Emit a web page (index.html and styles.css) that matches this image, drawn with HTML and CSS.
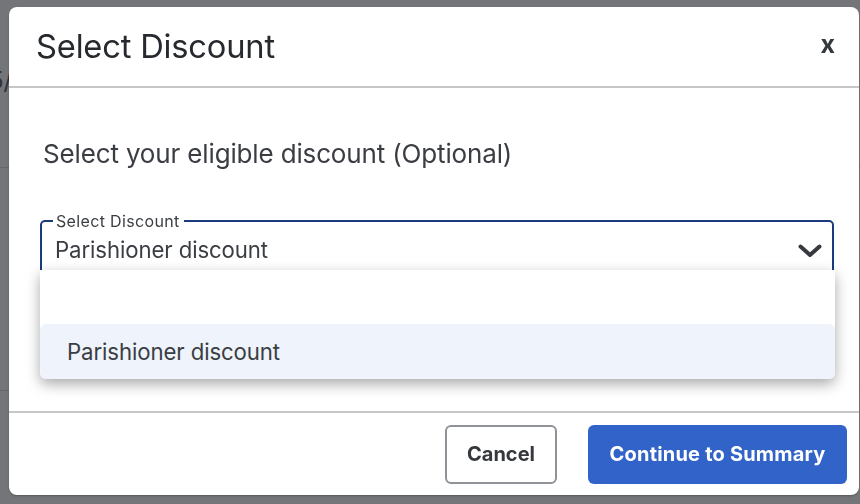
FILE: index.html
```html
<!DOCTYPE html>
<html lang="en">
<head>
<meta charset="utf-8">
<title>Select Discount</title>
<link rel="stylesheet" href="styles.css">
</head>
<body>
<div class="page">
  <div class="page-row page-row-top"><span class="page-text">5/</span></div>
  <div class="page-row page-row-mid"></div>
  <div class="page-row page-row-low"></div>
</div>
<div class="modal" role="dialog" aria-labelledby="modal-title">
  <header class="modal-header">
    <h1 id="modal-title" class="modal-title">Select Discount</h1>
    <button class="close-btn" type="button" aria-label="Close">x</button>
  </header>
  <div class="modal-body">
    <p class="intro">Select your eligible discount (Optional)</p>
    <div class="select-wrap">
      <fieldset class="select-field">
        <legend class="select-legend">Select Discount</legend>
        <div class="select-value-row">
          <span class="select-value">Parishioner discount</span>
          <svg class="chevron" width="24" height="14" viewBox="0 0 24 14" aria-hidden="true">
            <path d="M2.5 2.5 L12 11 L21.5 2.5" fill="none" stroke="#36393f" stroke-width="4" stroke-linecap="round" stroke-linejoin="round"/>
          </svg>
        </div>
      </fieldset>
      <ul class="dropdown" role="listbox">
        <li class="option option-empty" role="option"></li>
        <li class="option option-active" role="option">Parishioner discount</li>
      </ul>
    </div>
  </div>
  <footer class="modal-footer">
    <button class="btn btn-secondary" type="button">Cancel</button>
    <button class="btn btn-primary" type="button">Continue to Summary</button>
  </footer>
</div>
</body>
</html>
```

FILE: styles.css
```css
* { box-sizing: border-box; }

html, body {
  margin: 0;
  padding: 0;
  width: 860px;
  height: 504px;
  overflow: hidden;
}

body {
  background: #737579;
  font-family: Inter, "Noto Sans", "Liberation Sans", sans-serif;
  color: #3a3d42;
}

/* page behind the overlay */
.page {
  display: flex;
  flex-direction: column;
}
.page-row {
  border-bottom: 1px solid #65676b;
}
.page-row-top { height: 168px; padding-top: 66px; }
.page-row-mid { height: 223px; }
.page-row-low { height: 113px; border-bottom: 0; }
.page-text {
  font-size: 24px;
  color: #2f3236;
  margin-left: -11px;
}

/* modal */
.modal {
  position: fixed;
  left: 9px;
  top: 7px;
  width: 850px;
  height: 488px;
  background: #ffffff;
  border-radius: 8px;
  display: flex;
  flex-direction: column;
  box-shadow: 0 1px 2px rgba(0,0,0,0.25);
}

.modal-header {
  height: 81px;
  flex: none;
  display: flex;
  align-items: center;
  justify-content: space-between;
  padding: 0 24px 2px 27px;
  border-bottom: 2px solid #c6c6c6;
}

.modal-title {
  margin: 0;
  font-size: 32.7px;
  font-weight: 400;
  color: #26292d;
  letter-spacing: -0.2px;
}

.close-btn {
  border: 0;
  background: none;
  padding: 0;
  font-family: Inter, "Noto Sans", sans-serif;
  font-size: 25px;
  font-weight: 700;
  color: #35383d;
  line-height: 1;
  margin-top: -2px;
}

.modal-body {
  flex: 1;
  padding: 51px 24px 0 31px;
}

.intro {
  margin: 0 0 0 3px;
  font-size: 26px;
  line-height: 30px;
  color: #3a3d42;
  letter-spacing: -0.15px;
}

.select-wrap {
  position: relative;
  margin-top: 44px;
  width: 795px;
}

.select-field {
  margin: 0;
  width: 794px;
  height: 64px;
  border: 2px solid #1c3b7d;
  border-radius: 5px;
  padding: 0 10px 0 13px;
}

.select-legend {
  font-size: 16px;
  color: #3a3d42;
  padding: 0 4px 0 3px;
  margin-left: -2px;
  line-height: 16px;
  letter-spacing: 0.35px;
}

.select-value-row {
  display: flex;
  align-items: center;
  justify-content: space-between;
  margin-top: 7px;
}

.select-value {
  font-size: 22.2px;
  color: #3a3d42;
  letter-spacing: -0.1px;
}

.chevron {
  margin-top: 2px;
  margin-right: 0;
}

.dropdown {
  position: absolute;
  left: 0;
  top: 57px;
  width: 795px;
  margin: 0;
  padding: 0;
  list-style: none;
  background: #ffffff;
  border-radius: 0 0 6px 6px;
  box-shadow: 0 5px 14px rgba(0,0,0,0.34);
  overflow: hidden;
}

.option {
  height: 54px;
  display: flex;
  align-items: center;
  padding-left: 27px;
  font-size: 22.2px;
  color: #3a3d42;
  letter-spacing: -0.1px;
}
.option-active {
  height: 55px;
  background: #eef3fc;
  border-radius: 6px;
}

.modal-footer {
  flex: none;
  height: 84px;
  border-top: 2px solid #c6c6c6;
  display: flex;
  align-items: center;
  justify-content: flex-end;
  gap: 31px;
  padding: 0 12px 0 0;
}

.btn {
  height: 59px;
  border-radius: 6px;
  font-family: Inter, "Noto Sans", sans-serif;
  font-size: 20px;
  font-weight: 700;
  cursor: pointer;
}

.btn-secondary {
  width: 112px;
  background: #ffffff;
  border: 2px solid #8f9297;
  color: #35383d;
}

.btn-primary {
  width: 259px;
  background: #3163c8;
  border: 0;
  color: #ffffff;
  letter-spacing: 0.2px;
}
```
